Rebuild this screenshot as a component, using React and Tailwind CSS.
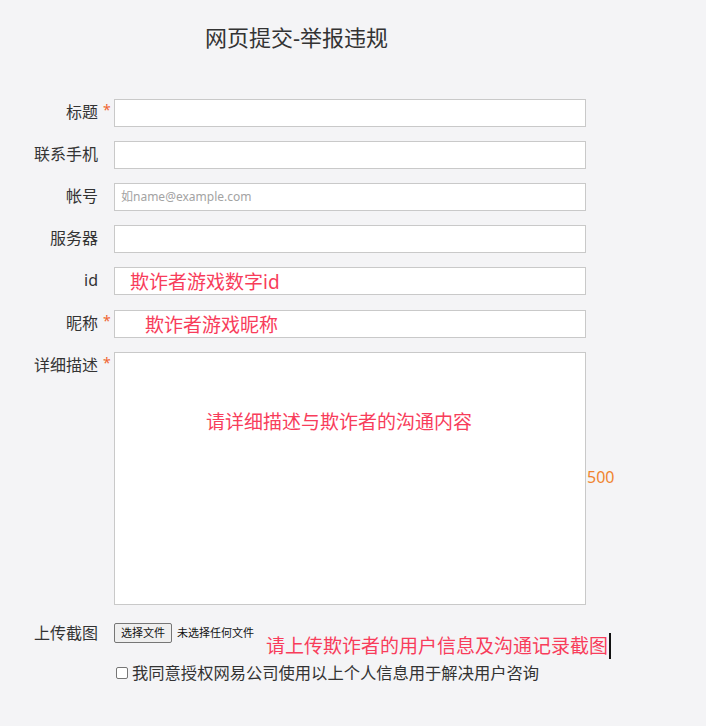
import React from "react";

const font = "font-['Noto_Sans','Noto_Sans_CJK_SC',sans-serif]";

function Label({ text, req }) {
  return (
    <div className="flex shrink-0">
      <div className="w-[98px] text-right text-[16px] leading-[26px] text-[#333]">{text}</div>
      <div className="w-[16px] pl-[5px] text-[14px] leading-[22px] text-[#f0652f]">{req ? "*" : ""}</div>
    </div>
  );
}

function Box({ children, className = "" }) {
  return (
    <div className={"h-[28px] w-[472px] border border-[#c9c9c9] bg-white " + className}>{children}</div>
  );
}

export default function App() {
  return (
    <div className={"min-h-[726px] w-full bg-[#f4f4f6] " + font}>
      <div className="pt-[21px] pl-[205px] text-[22px] leading-[32px] text-[#333]">网页提交-举报违规</div>
      <div className="mt-[46px] flex flex-col gap-[14px]">
        <div className="flex items-start">
          <Label text="标题" req />
          <Box />
        </div>
        <div className="flex items-start">
          <Label text="联系手机" />
          <Box />
        </div>
        <div className="flex items-start">
          <Label text="帐号" />
          <Box className="pl-[6px] text-[12px] leading-[26px] text-[#a3a3a3]">如name@example.com</Box>
        </div>
        <div className="flex items-start">
          <Label text="服务器" />
          <Box />
        </div>
        <div className="flex items-start">
          <Label text="id" />
          <Box className="pl-[15px] text-[19px] leading-[28px] text-[#f83d5b]">欺诈者游戏数字id</Box>
        </div>
        <div className="mt-[1px] flex items-start">
          <Label text="昵称" req />
          <Box className="pl-[30px] text-[19px] leading-[28px] text-[#f83d5b]">欺诈者游戏昵称</Box>
        </div>
        <div className="flex items-start">
          <Label text="详细描述" req />
          <div className="h-[253px] w-[472px] border border-[#c9c9c9] bg-white pl-[91px] pt-[56px] text-[19px] leading-[26px] text-[#f83d5b]">
            请详细描述与欺诈者的沟通内容
          </div>
          <span className="self-center pb-[4px] pl-[1px] text-[16px] leading-[24px] text-[#f0842f]">500</span>
        </div>
      </div>
      <div className="mt-[15px] flex items-start">
        <Label text="上传截图" />
        <div className="mt-[3px] flex items-center">
          <div className="flex h-[20px] w-[58px] items-center justify-center rounded-[2px] border border-[#767676] bg-[#efefef] text-[11px] text-[#111]">
            选择文件
          </div>
          <span className="ml-[5px] text-[11px] leading-[20px] text-[#111]">未选择任何文件</span>
        </div>
        <div className="ml-[12px] mt-[13px] flex items-center">
          <span className="text-[19px] leading-[26px] text-[#f83d5b]">请上传欺诈者的用户信息及沟通记录截图</span>
          <span className="ml-[1px] inline-block h-[26px] w-[2px] bg-[#111]"></span>
        </div>
      </div>
      <div className="mt-[2px] flex items-center pl-[116px]">
        <span className="inline-block h-[12px] w-[12px] rounded-[2px] border border-[#767676] bg-white"></span>
        <span className="ml-[4px] text-[16.3px] leading-[24px] text-[#333]">我同意授权网易公司使用以上个人信息用于解决用户咨询</span>
      </div>
    </div>
  );
}
